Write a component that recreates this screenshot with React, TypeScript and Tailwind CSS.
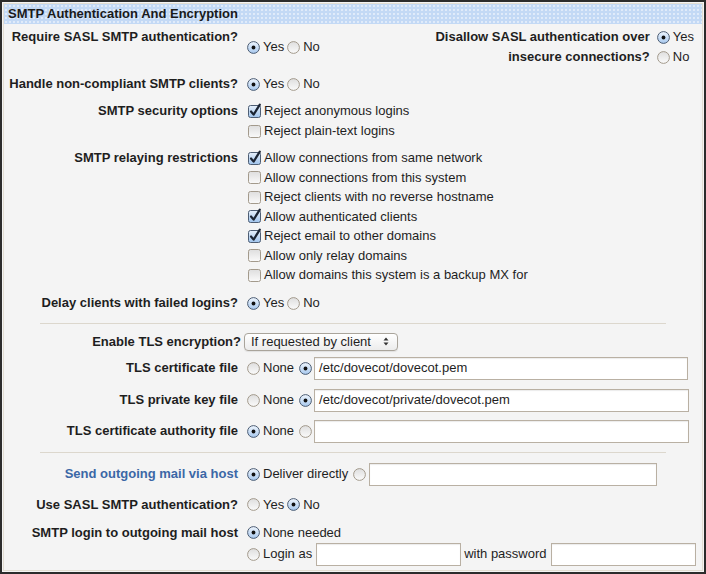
import type { ReactNode } from "react";

const Radio = ({ on }: { on?: boolean }) => (
  <svg width="13" height="13" viewBox="0 0 13 13" className="shrink-0">
    <defs>
      <linearGradient id="radOn" x1="0" y1="0" x2="0" y2="1">
        <stop offset="0" stopColor="#eef5fd" />
        <stop offset="1" stopColor="#a7c8ee" />
      </linearGradient>
      <linearGradient id="radOff" x1="0" y1="0" x2="0" y2="1">
        <stop offset="0" stopColor="#dedede" />
        <stop offset="1" stopColor="#fbfbfb" />
      </linearGradient>
    </defs>
    <circle
      cx="6.5"
      cy="6.5"
      r="5.9"
      fill={on ? "url(#radOn)" : "url(#radOff)"}
      stroke={on ? "#4d5d73" : "#a39a8c"}
      strokeWidth="1"
    />
    {on && <circle cx="6.5" cy="6.5" r="1.9" fill="#111" />}
  </svg>
);

const Check = ({ on }: { on?: boolean }) => (
  <svg width="14" height="14" viewBox="0 0 14 14" className="shrink-0 overflow-visible">
    <defs>
      <linearGradient id="chkOn" x1="0" y1="0" x2="0" y2="1">
        <stop offset="0" stopColor="#e6f0fb" />
        <stop offset="1" stopColor="#9fc3ec" />
      </linearGradient>
      <linearGradient id="chkOff" x1="0" y1="0" x2="0" y2="1">
        <stop offset="0" stopColor="#dedede" />
        <stop offset="1" stopColor="#fafafa" />
      </linearGradient>
    </defs>
    <rect
      x="0.5"
      y="1.5"
      width="12"
      height="12"
      rx="2"
      fill={on ? "url(#chkOn)" : "url(#chkOff)"}
      stroke={on ? "#4d5d73" : "#a39a8c"}
    />
    {on && (
      <path
        d="M3 7.5 L5.6 10.6 L11.8 0.6"
        fill="none"
        stroke="#1b2433"
        strokeWidth="2.2"
        strokeLinecap="round"
        strokeLinejoin="round"
      />
    )}
  </svg>
);

const Opt = ({ on, children }: { on?: boolean; children: ReactNode }) => (
  <span className="flex items-center gap-[3px]">
    <Radio on={on} />
    <span>{children}</span>
  </span>
);

const Box = ({ on, children }: { on?: boolean; children: ReactNode }) => (
  <div className="flex h-[19.5px] items-center gap-[2px] pl-px">
    <Check on={on} />
    <span>{children}</span>
  </div>
);

const Field = ({ w, value }: { w: string; value?: string }) => (
  <div
    className={`${w} flex h-[23px] items-center border border-[#b9b0a3] bg-white pl-[4px] shadow-[inset_0_1px_1px_rgba(0,0,0,0.08)]`}
  >
    {value}
  </div>
);

const Label = ({ children, blue }: { children: ReactNode; blue?: boolean }) => (
  <div
    className={`w-[234px] shrink-0 text-right font-bold leading-5 ${
      blue ? "text-[#3b67a6]" : "text-[#1e1e1e]"
    }`}
  >
    {children}
  </div>
);

const Divider = ({ mt }: { mt: string }) => (
  <div className={`${mt} ml-[36px] mr-[36px] h-px bg-[#dcd7cd]`} />
);

export default function App() {
  return (
    <div
      className="h-[574px] w-[706px] overflow-hidden border-2 border-[#2c2c2c] bg-[#f4f4f4] p-px text-[13px] text-[#1e1e1e]"
      style={{ fontFamily: '"Liberation Sans", Arial, sans-serif' }}
    >
      <div className="h-full border border-[#e2ddd2]">
        <div className="h-5 bg-[#c3d9f5] bg-[radial-gradient(circle,rgba(255,255,255,0.75)_0.6px,transparent_0.9px)] bg-[length:4px_4px] pl-1 font-bold leading-5 text-[#1a1a1a]">
          SMTP Authentication And Encryption
        </div>

        {/* row 1: two settings side by side */}
        <div className="flex pt-[3px]">
          <Label>Require SASL SMTP authentication?</Label>
          <div className="ml-[9px] flex h-10 items-center gap-[3px]">
            <Opt on>Yes</Opt>
            <Opt>No</Opt>
          </div>
          <div className="ml-auto flex pr-[8px]">
            <div className="text-right font-bold leading-5">
              <div>Disallow SASL authentication over</div>
              <div>insecure connections?</div>
            </div>
            <div className="ml-[7px] flex flex-col leading-5">
              <div className="flex h-5 items-center">
                <Opt on>Yes</Opt>
              </div>
              <div className="flex h-5 items-center">
                <Opt>No</Opt>
              </div>
            </div>
          </div>
        </div>

        <div className="mt-[7px] flex">
          <Label>Handle non-compliant SMTP clients?</Label>
          <div className="ml-[9px] flex h-5 items-center gap-[3px]">
            <Opt on>Yes</Opt>
            <Opt>No</Opt>
          </div>
        </div>

        <div className="mt-[7px] flex">
          <Label>SMTP security options</Label>
          <div className="ml-[9px] flex flex-col">
            <div className="flex h-5 items-center gap-[2px] pl-px">
              <Check on />
              <span>Reject anonymous logins</span>
            </div>
            <div className="flex h-5 items-center gap-[2px] pl-px">
              <Check />
              <span>Reject plain-text logins</span>
            </div>
          </div>
        </div>

        <div className="mt-[7px] flex">
          <div className="w-[234px] shrink-0 text-right font-bold leading-[19.5px]">
            SMTP relaying restrictions
          </div>
          <div className="ml-[9px] flex flex-col">
            <Box on>Allow connections from same network</Box>
            <Box>Allow connections from this system</Box>
            <Box>Reject clients with no reverse hostname</Box>
            <Box on>Allow authenticated clients</Box>
            <Box on>Reject email to other domains</Box>
            <Box>Allow only relay domains</Box>
            <Box>Allow domains this system is a backup MX for</Box>
          </div>
        </div>

        <div className="mt-[8.5px] flex">
          <Label>Delay clients with failed logins?</Label>
          <div className="ml-[9px] flex h-5 items-center gap-[3px]">
            <Opt on>Yes</Opt>
            <Opt>No</Opt>
          </div>
        </div>

        <Divider mt="mt-[10px]" />

        <div className="mt-[8px] flex items-center">
          <div className="w-[237px] shrink-0 text-right font-bold">Enable TLS encryption?</div>
          <div className="ml-[3px] flex h-[18px] w-[154px] items-center justify-between rounded-[4px] border border-[#a9a49b] bg-[linear-gradient(#ffffff,#ececec)] pl-[6px] pr-[8px] shadow-[0_1px_1px_rgba(0,0,0,0.08)]">
            <span>If requested by client</span>
            <svg width="6" height="9" viewBox="0 0 6 9">
              <path d="M3 0.5 L5.5 3.5 H0.5 Z M3 8.5 L5.5 5.5 H0.5 Z" fill="#333" />
            </svg>
          </div>
        </div>

        <div className="mt-[5px] flex items-center">
          <Label>TLS certificate file</Label>
          <div className="ml-[9px] flex items-center gap-[5px]">
            <Opt>None</Opt>
            <Radio on />
          </div>
          <div className="ml-[2px]">
            <Field w="w-[374px]" value="/etc/dovecot/dovecot.pem" />
          </div>
        </div>

        <div className="mt-[9px] flex items-center">
          <Label>TLS private key file</Label>
          <div className="ml-[9px] flex items-center gap-[5px]">
            <Opt>None</Opt>
            <Radio on />
          </div>
          <div className="ml-[2px]">
            <Field w="w-[375px]" value="/etc/dovecot/private/dovecot.pem" />
          </div>
        </div>

        <div className="mt-[8px] flex items-center">
          <Label>TLS certificate authority file</Label>
          <div className="ml-[9px] flex items-center gap-[5px]">
            <Opt on>None</Opt>
            <Radio />
          </div>
          <div className="ml-[2px]">
            <Field w="w-[375px]" />
          </div>
        </div>

        <Divider mt="mt-[9px]" />

        <div className="mt-[10px] flex items-center">
          <Label blue>Send outgoing mail via host</Label>
          <div className="ml-[9px] flex items-center gap-[5px]">
            <Opt on>Deliver directly</Opt>
            <Radio />
          </div>
          <div className="ml-[3px]">
            <Field w="w-[288px]" />
          </div>
        </div>

        <div className="mt-[9px] flex">
          <Label>Use SASL SMTP authentication?</Label>
          <div className="ml-[9px] flex h-5 items-center gap-[3px]">
            <Opt>Yes</Opt>
            <Opt on>No</Opt>
          </div>
        </div>

        <div className="mt-[8px] flex">
          <Label>SMTP login to outgoing mail host</Label>
          <div className="ml-[9px] flex flex-col">
            <div className="flex h-5 items-center">
              <Opt on>None needed</Opt>
            </div>
            <div className="flex items-center">
              <Opt>Login as</Opt>
              <div className="ml-[4px]">
                <Field w="w-[145px]" />
              </div>
              <span className="ml-[3px]">with password</span>
              <div className="ml-[4px]">
                <Field w="w-[145px]" />
              </div>
            </div>
          </div>
        </div>
      </div>
    </div>
  );
}
